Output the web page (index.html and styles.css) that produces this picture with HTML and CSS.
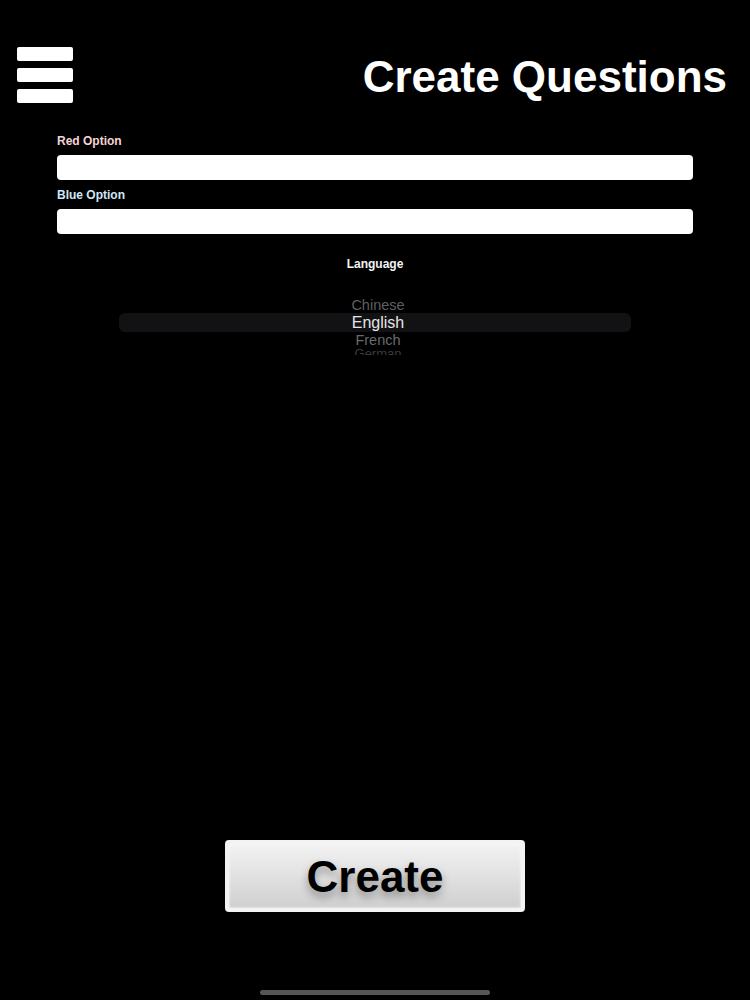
FILE: index.html
```html
<!DOCTYPE html>
<html lang="en">
<head>
<meta charset="utf-8">
<title>Create Questions</title>
<link rel="stylesheet" href="styles.css">
</head>
<body>
<div class="screen">
  <header class="header">
    <div class="menu" aria-label="Menu">
      <span class="bar"></span>
      <span class="bar"></span>
      <span class="bar"></span>
    </div>
    <h1 class="title">Create Questions</h1>
  </header>

  <form class="form">
    <label class="label label-red">Red Option</label>
    <input class="field" type="text">
    <label class="label label-blue">Blue Option</label>
    <input class="field" type="text">
  </form>

  <div class="lang-label">Language</div>
  <div class="picker">
    <div class="row row-near">Chinese</div>
    <div class="row row-selected">English</div>
    <div class="row row-near row-french">French</div>
    <div class="row row-far">German</div>
  </div>

  <div class="btn-wrap">
    <button class="create-btn" type="button">Create</button>
  </div>

  <div class="home-indicator"></div>
</div>
</body>
</html>
```

FILE: styles.css
```css
html, body {
  margin: 0;
  padding: 0;
  background: #000;
}

body {
  font-family: "Liberation Sans", Arial, Helvetica, sans-serif;
  color: #fff;
}

.screen {
  width: 750px;
  height: 1000px;
  overflow: hidden;
  display: flex;
  flex-direction: column;
}

.header {
  display: flex;
  justify-content: space-between;
  align-items: flex-start;
  padding: 47px 23px 0 17px;
}

.menu {
  display: flex;
  flex-direction: column;
  gap: 7px;
}

.bar {
  display: block;
  width: 56px;
  height: 14px;
  background: #fff;
  border-radius: 2px;
}

.title {
  margin: 5px 0 2px 0;
  font-size: 44px;
  line-height: 50px;
  font-weight: bold;
  color: #fff;
}

.form {
  display: flex;
  flex-direction: column;
  padding: 30px 57px 0 57px;
  margin: 0;
}

.label {
  font-size: 12px;
  line-height: 14px;
  font-weight: bold;
}

.label-red {
  color: #f6d4d6;
}

.label-blue {
  color: #cfe7f8;
  margin-top: 8px;
}

.field {
  display: block;
  box-sizing: border-box;
  width: 636px;
  height: 25px;
  margin: 7px 0 0 0;
  border: none;
  border-radius: 4px;
  background: #fff;
  outline: none;
  padding: 0 6px;
}

.lang-label {
  margin-top: 23px;
  text-align: center;
  font-size: 12px;
  line-height: 14px;
  font-weight: bold;
  color: #f4f4f4;
}

.picker {
  margin: 26px 119px 0 119px;
  display: flex;
  flex-direction: column;
}

.row {
  text-align: center;
  padding-left: 6px;
  overflow: hidden;
}

.row-near {
  height: 16px;
  font-size: 14.5px;
  line-height: 16px;
  color: #5e5e60;
}

.row-french {
  color: #6a6a6c;
}

.row-selected {
  height: 19px;
  font-size: 16px;
  line-height: 19px;
  color: #e6e6e8;
  background: #121214;
  border-radius: 6px;
}

.row-far {
  height: 7px;
  font-size: 13px;
  line-height: 12px;
  color: #3a3a3c;
}

.btn-wrap {
  display: flex;
  justify-content: center;
  margin-top: 485px;
}

.create-btn {
  box-sizing: border-box;
  width: 300px;
  height: 72px;
  border: 4px solid #f3f3f3;
  border-radius: 4px;
  background: linear-gradient(180deg, #f2f2f2 0%, #e3e3e3 45%, #cfcfcf 100%);
  box-shadow: inset 0 0 3px rgba(255, 255, 255, 0.9);
  padding: 2px 0 0 0;
  font-family: "Liberation Sans", Arial, Helvetica, sans-serif;
  font-size: 44px;
  line-height: 62px;
  font-weight: bold;
  color: #000;
  text-shadow: 0 5px 8px rgba(0, 0, 0, 0.35);
  cursor: pointer;
}

.home-indicator {
  width: 230px;
  height: 5px;
  border-radius: 3px;
  background: #565656;
  margin: 78px auto 0 auto;
}
```
